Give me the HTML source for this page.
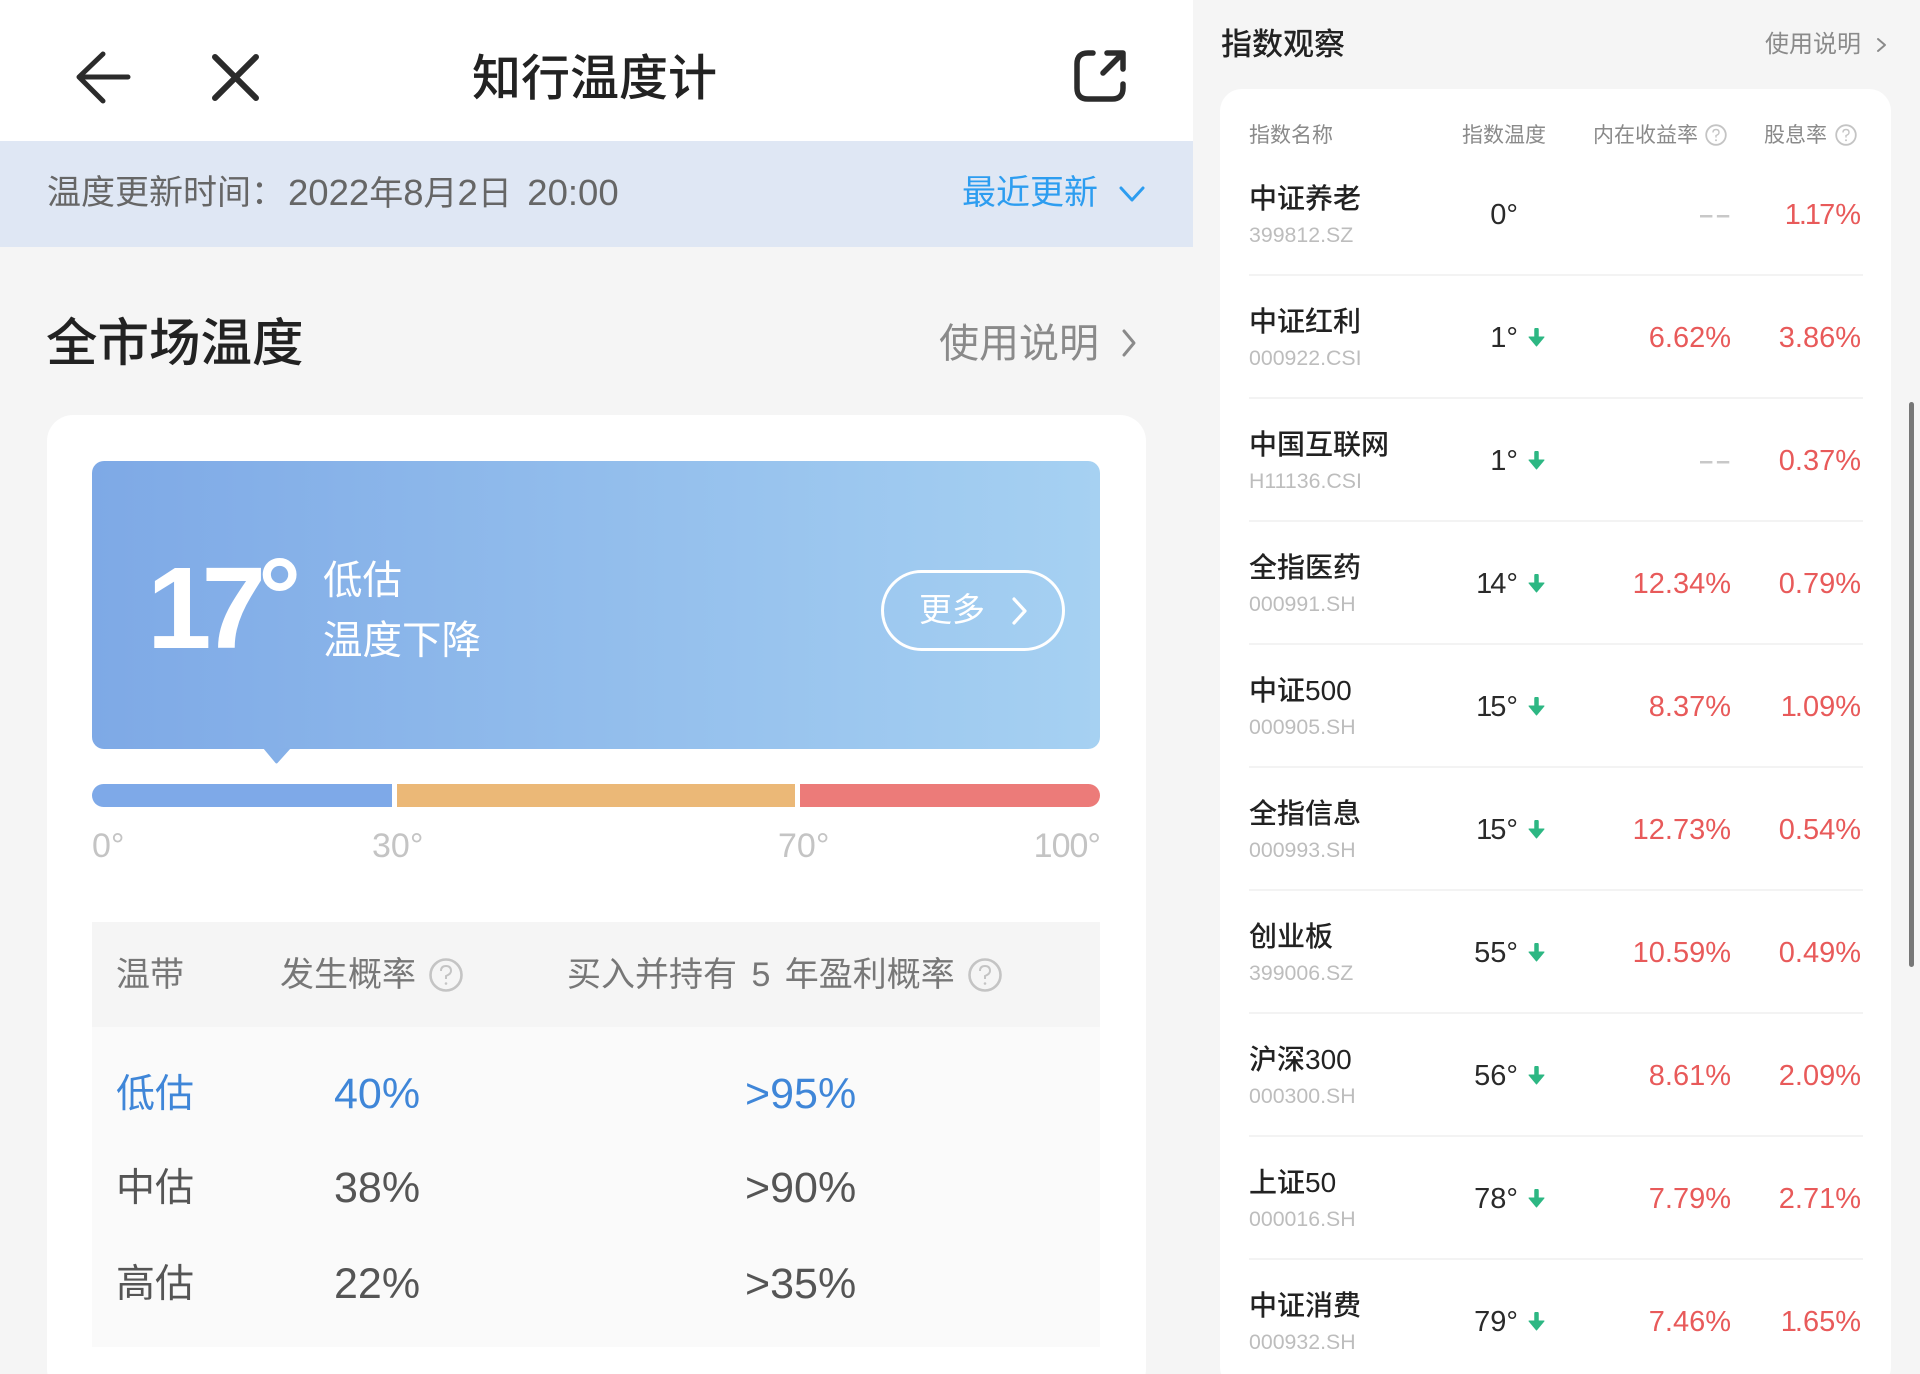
<!DOCTYPE html>
<html lang="zh-CN"><head><meta charset="utf-8"><title>知行温度计</title>
<style>
html,body{margin:0;padding:0;width:1920px;height:1374px;overflow:hidden;background:#f5f5f5}
body{position:relative;font-family:"Liberation Sans","Noto Sans CJK SC",sans-serif;color:#222}
.a,.row>*{position:absolute;white-space:nowrap}
.row{position:absolute;left:0;width:1920px;height:123px}
.row .div{left:1249px;width:614px;top:121px;height:2px;background:#f3f3f3}
.n{left:1249px;top:26px;font-size:28px;line-height:40px;color:#222;font-weight:500}
.c{left:1249px;top:68px;font-size:21.3px;line-height:28px;color:#bdbdbd}
.d{right:402px;top:42px;font-size:29px;line-height:40px;color:#2a2a2a}
.v1{right:189px;top:42px;font-size:29px;line-height:40px;color:#e85a5a}
.v2{right:59px;top:42px;font-size:29px;line-height:40px;color:#e85a5a}
.dash{right:187px;top:42px;font-size:25px;line-height:40px;color:#c8c8c8;letter-spacing:3px;font-weight:700}
.ar{left:1528px;top:52px}
.th{font-size:21px;line-height:30px;top:121px;color:#8a8a8a}
.h2{font-size:34px;line-height:46px;top:952px;color:#777}
.r{font-size:39px;line-height:52px;color:#555}
.rn{font-size:43px;line-height:52px;color:#555}
.q{position:absolute}
.o{letter-spacing:-2px}
</style></head><body>

<div class="a" style="left:0;top:0;width:1193px;height:141px;background:#fff"></div>
<svg class="a" style="left:0;top:0" width="1193" height="141" fill="none" stroke="#2b2b2b" stroke-linecap="round" stroke-linejoin="round">
<path d="M103 54 L79 77 L103 101 M79 77 H128" stroke-width="5"/>
<path d="M215 57 L256 98 M256 57 L215 98" stroke-width="6"/>
<path d="M1093 53 H1088 Q1077 53 1077 64 V88 Q1077 99 1088 99 H1112 Q1123 99 1123 88 V84 M1107 53 H1123 V69 M1123 53 L1103 73" stroke-width="5.5"/>
</svg>
<div class="a" style="left:472px;top:46px;font-size:49px;line-height:66px;font-weight:500;color:#222">知行温度计</div>

<div class="a" style="left:0;top:141px;width:1193px;height:106px;background:#dfe7f4"></div>
<div class="a" style="left:47px;top:169px;font-size:34px;line-height:48px;color:#666">温度更新时间：</div>
<div class="a" style="left:288px;top:169px;font-size:34px;line-height:48px;color:#666;word-spacing:6px"><span style="font-size:36.5px">2022</span>年<span style="font-size:36.5px">8</span>月<span style="font-size:36.5px">2</span>日 <span style="font-size:36.5px">20:00</span></div>
<div class="a" style="left:962px;top:169px;font-size:34px;line-height:48px;color:#2d9df0">最近更新</div>
<svg class="a" style="left:1117px;top:181px" width="32" height="26" fill="none" stroke="#2d9df0" stroke-width="3" stroke-linecap="round" stroke-linejoin="round"><path d="M4 7 L15 19 L26 7"/></svg>

<div class="a" style="left:46px;top:308px;font-size:51.5px;line-height:70px;font-weight:500;color:#222">全市场温度</div>
<div class="a" style="left:939px;top:321px;font-size:40px;line-height:46px;color:#8a8a8a">使用说明</div>
<svg class="a" style="left:1118px;top:325px" width="24" height="36" fill="none" stroke="#8a8a8a" stroke-width="3" stroke-linecap="round" stroke-linejoin="round"><path d="M6 6 L16 18 L6 30"/></svg>

<!-- main card -->
<div class="a" style="left:47px;top:415px;width:1099px;height:980px;background:#fff;border-radius:26px"></div>
<div class="a" style="left:92px;top:461px;width:1008px;height:288px;border-radius:12px;background:linear-gradient(90deg,#7ea9e6,#a6d1f2)"></div>
<svg class="a" style="left:262px;top:748px" width="30" height="17"><path d="M1 0 H29 L15.5 15 Q14.5 16 13.5 15 Z" fill="#85b0e8"/></svg>
<div class="a" style="left:147px;top:538px;font-size:116px;line-height:140px;font-weight:700;color:#fff;letter-spacing:-10px">17</div>
<div class="a" style="left:258px;top:536px;font-size:108px;line-height:120px;color:#fff;font-weight:700">°</div>
<div class="a" style="left:323px;top:556px;font-size:39.5px;line-height:50px;color:#fff">低估</div>
<div class="a" style="left:323px;top:616px;font-size:39.5px;line-height:50px;color:#fff">温度下降</div>
<div class="a" style="left:881px;top:570px;width:178px;height:75px;border:3px solid #fff;border-radius:42px"></div>
<div class="a" style="left:919px;top:587px;font-size:33px;line-height:46px;color:#fff">更多</div>
<svg class="a" style="left:1008px;top:594px" width="26" height="34" fill="none" stroke="#fff" stroke-width="3.2" stroke-linecap="round" stroke-linejoin="round"><path d="M6 5 L17 17 L6 29"/></svg>

<div class="a" style="left:92px;top:784px;width:300px;height:23px;background:#7ea9e8;border-radius:12px 0 0 12px"></div>
<div class="a" style="left:397px;top:784px;width:398px;height:23px;background:#ebb877"></div>
<div class="a" style="left:800px;top:784px;width:300px;height:23px;background:#ec7b79;border-radius:0 12px 12px 0"></div>

<div class="a" style="left:92px;top:824px;font-size:34px;line-height:44px;color:#c4c4c4">0°</div>
<div class="a" style="left:372px;top:824px;font-size:34px;line-height:44px;color:#c4c4c4">30°</div>
<div class="a" style="left:778px;top:824px;font-size:34px;line-height:44px;color:#c4c4c4">70°</div>
<div class="a" style="right:820px;top:824px;font-size:34px;line-height:44px;color:#c4c4c4;letter-spacing:-1px">100°</div>

<div class="a" style="left:92px;top:922px;width:1008px;height:105px;background:#f5f5f5"></div>
<div class="a" style="left:92px;top:1027px;width:1008px;height:320px;background:#fafafa"></div>
<div class="a h2" style="left:116px">温带</div>
<div class="a h2" style="left:280px">发生概率</div>
<svg class="q" style="left:429px;top:958px" width="34" height="34" fill="none" stroke="#c4c4c4" stroke-width="2.6"><circle cx="17" cy="17" r="15.5"/><path d="M12 13 Q12 8 17 8 Q22 8 22 13 Q22 16 17 18 V21" stroke-width="2"/><circle cx="17" cy="25.5" r="1.3" fill="#c4c4c4" stroke="none"/></svg>
<div class="a h2" style="left:567px;word-spacing:5px">买入并持有 5 年盈利概率</div>
<svg class="q" style="left:968px;top:958px" width="34" height="34" fill="none" stroke="#c4c4c4" stroke-width="2.6"><circle cx="17" cy="17" r="15.5"/><path d="M12 13 Q12 8 17 8 Q22 8 22 13 Q22 16 17 18 V21" stroke-width="2"/><circle cx="17" cy="25.5" r="1.3" fill="#c4c4c4" stroke="none"/></svg>

<div class="a r" style="left:116px;top:1069px;color:#3f86d8">低估</div>
<div class="a rn" style="left:334px;top:1068px;color:#3f86d8">40%</div>
<div class="a rn" style="left:745px;top:1068px;color:#3f86d8">&gt;95%</div>
<div class="a r" style="left:116px;top:1163px">中估</div>
<div class="a rn" style="left:334px;top:1162px">38%</div>
<div class="a rn" style="left:745px;top:1162px">&gt;90%</div>
<div class="a r" style="left:116px;top:1259px">高估</div>
<div class="a rn" style="left:334px;top:1258px">22%</div>
<div class="a rn" style="left:745px;top:1258px">&gt;35%</div>

<!-- right panel -->
<div class="a" style="left:1221px;top:24px;font-size:31px;line-height:42px;font-weight:500;color:#222">指数观察</div>
<div class="a" style="left:1765px;top:28px;font-size:24px;line-height:34px;color:#8a8a8a">使用说明</div>
<svg class="a" style="left:1874px;top:35px" width="16" height="20" fill="none" stroke="#8a8a8a" stroke-width="2" stroke-linecap="round" stroke-linejoin="round"><path d="M4 4 L11 10 L4 16"/></svg>

<div class="a" style="left:1220px;top:89px;width:671px;height:1300px;background:#fff;border-radius:22px"></div>
<div class="a th" style="left:1249px">指数名称</div>
<div class="a th" style="left:1462px">指数温度</div>
<div class="a th" style="left:1593px">内在收益率</div>
<svg class="q" style="left:1705px;top:124px" width="22" height="22" fill="none" stroke="#c4c4c4" stroke-width="1.8"><circle cx="11" cy="11" r="9.8"/><path d="M8 8.5 Q8 5.5 11 5.5 Q14 5.5 14 8.5 Q14 10.5 11 11.5 V13.5" stroke-width="1.4"/><circle cx="11" cy="16.3" r="1" fill="#c4c4c4" stroke="none"/></svg>
<div class="a th" style="left:1764px">股息率</div>
<svg class="q" style="left:1835px;top:124px" width="22" height="22" fill="none" stroke="#c4c4c4" stroke-width="1.8"><circle cx="11" cy="11" r="9.8"/><path d="M8 8.5 Q8 5.5 11 5.5 Q14 5.5 14 8.5 Q14 10.5 11 11.5 V13.5" stroke-width="1.4"/><circle cx="11" cy="16.3" r="1" fill="#c4c4c4" stroke="none"/></svg>

<div class="row" style="top:153px"><div class="n">中证养老</div><div class="c">399812.SZ</div><div class="d">0°</div><div class="dash">––</div><div class="v2"><span class="o">1.1</span>7%</div><div class="div"></div></div>
<div class="row" style="top:276px"><div class="n">中证红利</div><div class="c">000922.CSI</div><div class="d">1°</div><svg class="ar" width="17" height="19"><path d="M8.5 1.5 V11" stroke="#2db783" stroke-width="4.5" stroke-linecap="round"/><path d="M1 9 H16 L8.5 18 Z" fill="#2db783" stroke="#2db783" stroke-linejoin="round"/></svg><div class="v1">6.62%</div><div class="v2">3.86%</div><div class="div"></div></div>
<div class="row" style="top:399px"><div class="n">中国互联网</div><div class="c">H11136.CSI</div><div class="d">1°</div><svg class="ar" width="17" height="19"><path d="M8.5 1.5 V11" stroke="#2db783" stroke-width="4.5" stroke-linecap="round"/><path d="M1 9 H16 L8.5 18 Z" fill="#2db783" stroke="#2db783" stroke-linejoin="round"/></svg><div class="dash">––</div><div class="v2">0.37%</div><div class="div"></div></div>
<div class="row" style="top:522px"><div class="n">全指医药</div><div class="c">000991.SH</div><div class="d"><span class="o">1</span>4°</div><svg class="ar" width="17" height="19"><path d="M8.5 1.5 V11" stroke="#2db783" stroke-width="4.5" stroke-linecap="round"/><path d="M1 9 H16 L8.5 18 Z" fill="#2db783" stroke="#2db783" stroke-linejoin="round"/></svg><div class="v1">12.34%</div><div class="v2">0.79%</div><div class="div"></div></div>
<div class="row" style="top:645px"><div class="n">中证500</div><div class="c">000905.SH</div><div class="d"><span class="o">1</span>5°</div><svg class="ar" width="17" height="19"><path d="M8.5 1.5 V11" stroke="#2db783" stroke-width="4.5" stroke-linecap="round"/><path d="M1 9 H16 L8.5 18 Z" fill="#2db783" stroke="#2db783" stroke-linejoin="round"/></svg><div class="v1">8.37%</div><div class="v2"><span class="o">1</span>.09%</div><div class="div"></div></div>
<div class="row" style="top:768px"><div class="n">全指信息</div><div class="c">000993.SH</div><div class="d"><span class="o">1</span>5°</div><svg class="ar" width="17" height="19"><path d="M8.5 1.5 V11" stroke="#2db783" stroke-width="4.5" stroke-linecap="round"/><path d="M1 9 H16 L8.5 18 Z" fill="#2db783" stroke="#2db783" stroke-linejoin="round"/></svg><div class="v1">12.73%</div><div class="v2">0.54%</div><div class="div"></div></div>
<div class="row" style="top:891px"><div class="n">创业板</div><div class="c">399006.SZ</div><div class="d">55°</div><svg class="ar" width="17" height="19"><path d="M8.5 1.5 V11" stroke="#2db783" stroke-width="4.5" stroke-linecap="round"/><path d="M1 9 H16 L8.5 18 Z" fill="#2db783" stroke="#2db783" stroke-linejoin="round"/></svg><div class="v1">10.59%</div><div class="v2">0.49%</div><div class="div"></div></div>
<div class="row" style="top:1014px"><div class="n">沪深300</div><div class="c">000300.SH</div><div class="d">56°</div><svg class="ar" width="17" height="19"><path d="M8.5 1.5 V11" stroke="#2db783" stroke-width="4.5" stroke-linecap="round"/><path d="M1 9 H16 L8.5 18 Z" fill="#2db783" stroke="#2db783" stroke-linejoin="round"/></svg><div class="v1">8.61%</div><div class="v2">2.09%</div><div class="div"></div></div>
<div class="row" style="top:1137px"><div class="n">上证50</div><div class="c">000016.SH</div><div class="d">78°</div><svg class="ar" width="17" height="19"><path d="M8.5 1.5 V11" stroke="#2db783" stroke-width="4.5" stroke-linecap="round"/><path d="M1 9 H16 L8.5 18 Z" fill="#2db783" stroke="#2db783" stroke-linejoin="round"/></svg><div class="v1">7.79%</div><div class="v2">2.71%</div><div class="div"></div></div>
<div class="row" style="top:1260px"><div class="n">中证消费</div><div class="c">000932.SH</div><div class="d">79°</div><svg class="ar" width="17" height="19"><path d="M8.5 1.5 V11" stroke="#2db783" stroke-width="4.5" stroke-linecap="round"/><path d="M1 9 H16 L8.5 18 Z" fill="#2db783" stroke="#2db783" stroke-linejoin="round"/></svg><div class="v1">7.46%</div><div class="v2"><span class="o">1</span>.65%</div></div>

<div class="a" style="left:1909px;top:402px;width:5px;height:565px;background:#777;border-radius:3px"></div>
</body></html>
